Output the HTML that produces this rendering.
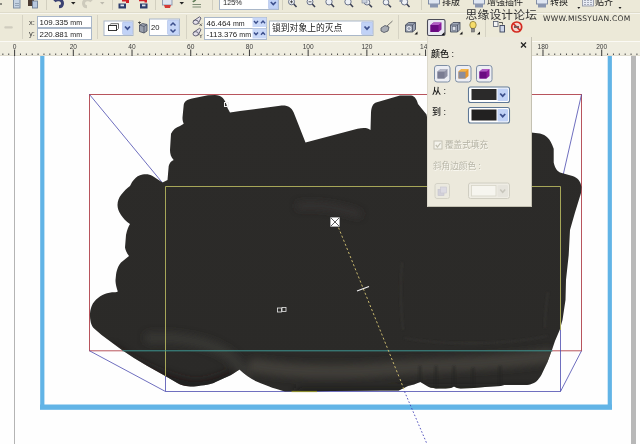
<!DOCTYPE html>
<html lang="zh">
<head>
<meta charset="utf-8">
<title>CorelDRAW</title>
<style>
html,body{margin:0;padding:0;}
body{width:640px;height:444px;overflow:hidden;background:#fff;position:relative;
  font-family:"Liberation Sans","Noto Sans CJK SC",sans-serif;}
#app{position:absolute;left:0;top:0;width:640px;height:444px;overflow:hidden;background:#fefefe;}
.inp,.lbl,.cn,.wm,svg{will-change:transform;}
.abs{position:absolute;}
#tb1{left:0;top:0;width:640px;height:12px;background:#ece9d8;}
#tb2{left:0;top:12px;width:640px;height:29px;background:#ece9d8;border-top:1px solid #dfdccb;box-shadow:inset 0 1px 0 #f7f6ee;box-sizing:border-box;}
#ruler{left:0;top:41px;width:640px;height:15px;background:#efede0;border-top:1px solid #fbfaf5;box-sizing:border-box;}
.inp{position:absolute;background:#fff;border:1px solid #a9b7c9;box-sizing:border-box;font-size:7.9px;line-height:9px;color:#222;white-space:nowrap;overflow:hidden;}
.inp span{position:absolute;left:1.6px;top:1px;}
.inp i{font-style:normal;font-size:7px;}
.lbl{position:absolute;font-size:7.5px;line-height:9px;color:#333;white-space:nowrap;}
.cn{position:absolute;font-size:9px;line-height:10px;color:#1a1a1a;white-space:nowrap;}
.b{font-weight:500;}
.sep{position:absolute;width:1px;background:#c9c6b6;}
.arrowbtn{position:absolute;background:#c3d3f5;border:1px solid #b0c2ec;box-sizing:border-box;border-radius:1px;}
.rl{position:absolute;font-size:7.5px;line-height:8px;color:#333;top:43px;width:20px;text-align:center;}
#panel{left:427px;top:37px;width:105px;height:170px;background:#ece9dc;border:1px solid #c4c1b2;border-left-color:#dcd9cc;border-top:none;box-sizing:border-box;}
</style>
</head>
<body>
<div id="app">

<!-- canvas artwork -->
<svg class="abs" style="left:0;top:56px" width="640" height="388" viewBox="0 56 640 388">
  <defs>
    <linearGradient id="gb" x1="0" y1="0" x2="0" y2="1">
      <stop offset="0" stop-color="#2c2b29"/>
      <stop offset="1" stop-color="#2b2a28"/>
    </linearGradient>
    <clipPath id="cb"><use href="#blob"/></clipPath>
    <filter id="bl" x="-20%" y="-50%" width="140%" height="200%"><feGaussianBlur stdDeviation="3.5"/></filter>
    <filter id="bl2" x="-20%" y="-50%" width="140%" height="200%"><feGaussianBlur stdDeviation="1.2"/></filter>
  </defs>
  <rect x="0" y="56" width="640" height="388" fill="#fefefe"/>
  <!-- guide lines -->
  <rect x="14" y="56" width="1" height="388" fill="#b4b4b4"/>
  <rect x="631" y="56" width="5" height="388" fill="#b8b8b8"/>
  <!-- page border -->
  <path d="M42.3 56 V407 H609.8 V56" fill="none" stroke="#62b4e6" stroke-width="4.2"/>
  <rect x="40" y="404.5" width="572" height="5.3" fill="#62b4e6"/>
  <!-- red bounding box -->
  <rect x="89.500" y="94.500" width="492" height="256.300" fill="none" stroke="#b8545c" stroke-width="1"/>
  <!-- blue perspective lines (behind) -->
  <path d="M89.500 94.500 L165.500 186.500 M581.500 94.500 L560.500 186.500 M89.500 350.800 L165.500 391.500 M581.500 350.800 L560.500 391.500 M165.500 391.500 H560.500 M560.500 330 V391.500 M165.500 375 V391.500" fill="none" stroke="#4a4aae" stroke-width="0.800"/>
  <!-- blob -->
  <path id="blob" fill="url(#gb)" d="M215 95 C221 95 225 98 227.5 108 L230 112.5 L240 111 L280 105.7 C288 105 291 107 293.7 112.5 L305.5 142.5 L357.5 128.7 C363 127.5 368 127.5 370.5 130 L371 112.5 C371.500 106 373 104 376 102.500 L400 95.500 L411 95.500 C415 96 417 100 418 104 L426.500 114.500 L430 132 L531 132.500 L540 133.500 C546 135 550 138 553.700 148.700 L553.700 162.500 C555 168 557 171 560 172.500 L572.500 176 C578 178 580.500 181 581.500 187 L581 193 L575 212.500 L570 230 L568.700 255 L566 280 L565.5 300 L562.5 320 L559.7 330 L555 341 L552 349.7 L547.5 362 L542.8 372 C541 376 539.5 378 538 379.7 C536 382 534.5 383 532.5 383.4 C530 384.5 528 385 525 385 L504.4 385 L500.6 386 L485 387 L473.7 388 L460.6 388.5 L457 388 L454 386.6 L451 388 L445.6 388.5 L436 388.5 C432 388 429.5 387.500 427 386 L420.3 382 C416 384 412 385 408 386 L398.7 390.4 L380 390.6 L285 391.4 C278 390 267.5 386.4 256.6 381.6 C250 378.5 245 374.5 239.5 369.5 C236 372 230 376 223.8 378.3 C219 380.5 216 382 213.7 383 C209 384.7 205 385.3 201 385.6 C197 386.3 193 386.7 190.3 386.5 C187 386.3 184.5 386 182.5 385.3 C179 384 177 383 174.7 381.4 L165.3 376 L146.5 365.5 L134 358 L122.3 350.3 L112.4 343 L101.6 335 L94.4 328.7 C92.5 327 91.5 325 90.8 322.4 C90 319 89.8 316 90 313.4 C90.3 310 91 308 91.7 306 C93 302.5 95.5 300 98 298 C101 295.5 104 294 107 293.2 L112 292.3 C114.5 292.3 116.5 292.2 117.8 291.5 C116 286 115.500 283 115.500 280 L116 275 C117 268 119 265 121 262.500 L129 256 C126.500 253 125.500 250 125 247.500 L126 235 C127 230 128.500 226.500 130 224 C126 221.500 123 218 121 215 C118.500 211 117.500 208 117.500 205 C117.500 201 119 197.500 121 195 C124 191 127 188 130 186 C131.500 183 132.500 181 133.700 180 C136 177 139 175 142.500 174.500 C147 174 150 174.500 152.500 176 L162.500 182.500 L167.500 180 L168.700 166 C169.500 163 171 161 173.700 160 C171 157 170 154 170 150 L171 133.700 C173 129.500 176 127.500 180 126 L183.700 123.700 C182.500 121 182.500 119 182.500 117.500 L183.700 105 C184.500 101 187 99.500 192 98.500 L208 95.300 Z"/>
  <!-- extrude shading -->
  <g clip-path="url(#cb)">
    <g filter="url(#bl)" fill="none" stroke-linecap="round">
      <path d="M255 366 C300 374 360 372 400 368 C450 364 500 364 548 356" stroke="#42403c" stroke-width="14" opacity="0.9"/>
      <path d="M150 338 C190 336 222 346 236 362 C241 368 243 372 246 376" stroke="#3d3b38" stroke-width="11" opacity="0.7"/>
      <path d="M112 350 C130 362 160 378 190 384 C205 386 220 380 232 374" stroke="#1e1d1c" stroke-width="9" opacity="0.8"/>
      <path d="M300 392 H545" stroke="#201f1e" stroke-width="9" opacity="0.9"/>
      <path d="M300 206 C320 204 340 208 358 214" stroke="#373633" stroke-width="7" opacity="0.8"/>
    </g>
    <g filter="url(#bl2)" stroke="#242322" stroke-width="1.600" opacity="0.8" fill="none">
      <path d="M436 366 V389 M454 366 V388 M473 368 V389 M500 366 V387 M420 366 V384"/>
    </g>
    <g filter="url(#bl2)" stroke="#3b3a37" stroke-width="1.200" opacity="0.9" fill="none">
      <path d="M404 338 C440 345 500 346 548 336"/>
      <path d="M402 262 C400 285 401 310 403 330"/>
      <path d="M548 292 C546 305 545 318 545 328"/>
    </g>
  </g>
  <!-- yellow face rect -->
  <path d="M165.500 376 V186.500 H560.500 V330" fill="none" stroke="#a6a658" stroke-width="1"/>
  <path d="M291.500 391.500 H317" stroke="#8c8c30" stroke-width="1.200"/>
  <!-- teal line over blob -->
  <path d="M122.500 350.800 H552.500" stroke="#3e9692" stroke-width="1"/>
  <!-- dashed VP line -->
  <path d="M338.500 227.500 L399.500 378" stroke="#c8b86e" stroke-width="1" stroke-dasharray="2.2 2.2" fill="none"/>
  <path d="M400 379 L404.500 391" stroke="#c8b86e" stroke-width="1" stroke-dasharray="2.2 2.2" fill="none"/>
  <path d="M404.500 391.500 L427 444" stroke="#4444b8" stroke-width="0.9" stroke-dasharray="1.6 2" fill="none"/>
  <!-- VP marker -->
  <rect x="330" y="217" width="10" height="10" fill="#fff" stroke="#2a2a2a" stroke-width="0.8"/>
  <path d="M331 218 L339 226 M339 218 L331 226" stroke="#333" stroke-width="0.8"/>
  <!-- tick -->
  <path d="M357 291 L369 286.500" stroke="#f2f2f2" stroke-width="1.2"/>
  <!-- small markers -->
  <rect x="277.500" y="308" width="4" height="4" fill="none" stroke="#e8e8e8" stroke-width="0.8"/>
  <rect x="282" y="307.500" width="4" height="4" fill="none" stroke="#e8e8e8" stroke-width="0.8"/>
  <rect x="224.500" y="102.500" width="4" height="4" fill="none" stroke="#f0f0f0" stroke-width="1"/>
</svg>

<!-- TOOLBAR ROW 1 -->
<div id="tb1" class="abs"></div>
<svg class="abs" style="left:0;top:0" width="640" height="12" viewBox="0 0 640 12">
  <!-- left small grip -->
  <rect x="0" y="3" width="2" height="2" fill="#8a8a80"/>
  <!-- doc icon -->
  <rect x="13.500" y="-1" width="6.500" height="9" fill="#c4d2e2" stroke="#7f8fa3" stroke-width="1"/>
  <path d="M15 3.500 H19 M15 5.500 H19" stroke="#8898ac" stroke-width="0.8"/>
  <!-- paste icon -->
  <rect x="28" y="-1" width="6" height="7" fill="#4a3a30"/>
  <rect x="32.500" y="1" width="5" height="7" fill="#b8c8de" stroke="#6f7f95" stroke-width="0.9"/>
  <rect x="46" y="0" width="1" height="10" fill="#d2cfbf"/>
  <!-- undo -->
  <path d="M54.500 1.200 C57 -1.500 62.500 -0.500 62.500 3.300 C62.500 5.500 61 6.800 59 6.800" fill="none" stroke="#3b4272" stroke-width="3"/>
  <path d="M71 2 H75.500 L73.250 4.500 Z" fill="#222"/>
  <!-- redo disabled -->
  <path d="M91.500 1.200 C89 -1.500 83.500 -0.500 83.500 3.300 C83.500 5.500 85 6.800 87 6.800" fill="none" stroke="#cdcabc" stroke-width="3"/>
  <path d="M100 2 H104.500 L102.250 4.500 Z" fill="#bdbaae"/>
  <rect x="112" y="0" width="1" height="10" fill="#d2cfbf"/>
  <!-- import -->
  <path d="M122 0 H129 V3 H126 V1.500 H122 Z" fill="#d02028"/>
  <rect x="118.500" y="3.500" width="7.500" height="5" fill="#2c3c6c"/>
  <rect x="120.500" y="4.500" width="3.500" height="1.800" fill="#dfe6f0"/>
  <!-- export -->
  <path d="M139 0 H147 V2.500 L144.500 2.500 V1.300 H139 Z" fill="#d02028"/>
  <rect x="140" y="3.500" width="7.500" height="5" fill="#2c3c6c"/>
  <rect x="142" y="4.500" width="3.500" height="1.800" fill="#dfe6f0"/>
  <rect x="155" y="0" width="1" height="10" fill="#d2cfbf"/>
  <!-- app launcher -->
  <rect x="162.500" y="-1" width="9.500" height="6" fill="#dde3ee" stroke="#8a93a8" stroke-width="0.9"/>
  <path d="M164 5 H171 L170 8 H165 Z" fill="#d43a36"/>
  <path d="M179.500 2 H184 L181.750 4.500 Z" fill="#222"/>
  <!-- options icon -->
  <path d="M192.500 1.500 L196 0 M192.500 4.500 H201 M192.500 7 H201" stroke="#7d8c74" stroke-width="1.100" fill="none"/>
  <path d="M193 2 L195.500 0.300" stroke="#5a7a50" stroke-width="1.200"/>
  <rect x="212" y="0" width="1" height="10" fill="#d2cfbf"/>
  <!-- zoom combo -->
  <rect x="219.500" y="-1" width="59" height="10.500" fill="#fff" stroke="#a9b7c9" stroke-width="1"/>
  <rect x="268.500" y="-1" width="9.500" height="10" rx="1" fill="#c1d2f6" stroke="#aebfe8" stroke-width="0.600"/>
  <path d="M270.800 2 L273.300 4.600 L275.800 2" stroke="#3c4f8c" stroke-width="1.600" fill="none"/>
  <rect x="282" y="0" width="1" height="10" fill="#d2cfbf"/>
  <!-- zoom icons -->
  <g fill="#eef1f6" stroke="#6a7288" stroke-width="1">
    <circle cx="291.500" cy="1.800" r="3"/><circle cx="310" cy="1.800" r="3"/><circle cx="329" cy="1.800" r="3.200"/>
    <circle cx="348" cy="1.800" r="3.200"/><circle cx="367" cy="2.200" r="2.800"/><circle cx="386" cy="2.200" r="2.800"/><circle cx="404.500" cy="1.800" r="3.200"/>
  </g>
  <g stroke="#3a3f52" stroke-width="1.500" fill="none">
    <path d="M293.800 4 L296.500 7"/><path d="M312.300 4 L315 7"/><path d="M331.300 4 L334 7"/><path d="M350.300 4 L353 7"/><path d="M369.300 4.400 L372 7.200"/><path d="M388.300 4.400 L391 7.200"/><path d="M406.800 4 L409.500 7"/>
  </g>
  <path d="M290 1.800 H293 M291.500 0.300 V3.300 M308.500 1.800 H311.500" stroke="#333" stroke-width="0.800"/>
  <rect x="362" y="-1" width="5" height="4" fill="#c9d0dc" stroke="#7a8296" stroke-width="0.600"/>
  <rect x="399.500" y="-1" width="3" height="3" fill="#8a93a8"/>
  <rect x="421" y="0" width="1" height="10" fill="#d2cfbf"/>
  <!-- menu icons -->
  <g>
    <rect x="428.500" y="-1" width="11" height="5" fill="#dfe6f2" stroke="#7a86a0" stroke-width="0.900"/>
    <rect x="430" y="4" width="8" height="3.500" fill="#8a96b0"/>
    <rect x="473.500" y="-1" width="11" height="5" fill="#dfe6f2" stroke="#7a86a0" stroke-width="0.900"/>
    <rect x="475" y="4" width="8" height="3.500" fill="#8a96b0"/>
    <rect x="536.500" y="-1" width="11" height="5" fill="#dfe6f2" stroke="#7a86a0" stroke-width="0.900"/>
    <rect x="538" y="4" width="8" height="3.500" fill="#8a96b0"/>
    <rect x="582.500" y="-1" width="11" height="7" fill="#e8ecf4" stroke="#8a90a0" stroke-width="0.800"/>
    <path d="M585 0 V6 M588 0 V6 M591 0 V6" stroke="#555c70" stroke-width="0.900" stroke-dasharray="1 1"/>
  </g>
  <path d="M577.300 7 h3 l-1.500 2 Z M618.500 7 h3 l-1.500 2 Z" fill="#222"/>
</svg>
<div class="lbl" style="left:222.500px;top:-1.800px;font-size:8px;line-height:9px;color:#222;transform:scaleX(0.93);transform-origin:0 0;">125%</div>
<div class="cn" style="left:442px;top:-3.500px;">排版</div>
<div class="cn" style="left:487px;top:-3.500px;">增强插件</div>
<div class="cn" style="left:550px;top:-3.500px;">转换</div>
<div class="cn" style="left:595px;top:-3.500px;">贴齐</div>
<!-- TOOLBAR ROW 2 (property bar) -->
<div id="tb2" class="abs"></div>
<svg class="abs" style="left:0;top:12px" width="640" height="29" viewBox="0 12 640 29">
  <!-- disabled dash -->
  <rect x="4.300" y="26.300" width="8.500" height="2.200" rx="1" fill="#cfccbe"/>
  <rect x="22" y="15" width="1" height="24" fill="#d6d3c4"/>
  <rect x="97" y="15" width="1" height="24" fill="#d6d3c4"/>
  <!-- preset combo -->
  <rect x="104" y="21" width="29" height="14.500" fill="#fff" stroke="#a9b7c9" stroke-width="1"/>
  <rect x="122.500" y="22" width="10" height="12.500" rx="1" fill="#c1d2f6" stroke="#aebfe8" stroke-width="0.600"/>
  <path d="M125 26.500 L127.500 29.200 L130 26.500" stroke="#3c4f8c" stroke-width="1.700" fill="none"/>
  <rect x="108.500" y="25.500" width="8" height="5" fill="#fff" stroke="#333" stroke-width="1"/>
  <path d="M109.500 25 L111 23.700 H118.500 V28.500 L117 30" stroke="#444" stroke-width="0.800" fill="none"/>
  <!-- depth icon -->
  <path d="M139.500 25 L142.500 23.500 L147 24.500 V31 L144 33 L139.500 31.500 Z" fill="#9aa0ae" stroke="#454a5a" stroke-width="0.800"/>
  <path d="M139.500 25 L144 26.500 L147 24.500 M144 26.500 V33" stroke="#454a5a" stroke-width="0.700" fill="none"/>
  <path d="M138 22.500 H141 M139.500 21.500 V24" stroke="#333" stroke-width="0.800"/>
  <!-- spin box -->
  <rect x="149.500" y="19" width="30" height="16.500" fill="#fff" stroke="#a9b7c9" stroke-width="1"/>
  <rect x="167.500" y="20" width="11.500" height="14.500" rx="1" fill="#c6d6f7" stroke="#aebfe8" stroke-width="0.600"/>
  <path d="M170.500 25.500 L173 23 L175.500 25.500 M170.500 29.500 L173 32 L175.500 29.500" stroke="#3c4f8c" stroke-width="1.500" fill="none"/>
  <rect x="186" y="15" width="1" height="24" fill="#d6d3c4"/>
  <!-- VP icons -->
  <g stroke="#55556a" stroke-width="0.900" fill="#e4e0ea">
    <path d="M193.300 21 L199.500 16.800 L201 18 L198.300 23.500 Z"/>
    <ellipse cx="195.700" cy="22.300" rx="2.700" ry="2.100"/>
    <path d="M193.300 32.500 L199.500 28.300 L201 29.500 L198.300 35 Z"/>
    <ellipse cx="195.700" cy="33.800" rx="2.700" ry="2.100"/>
  </g>
  <path d="M199.500 23.500 L202 26 M202 23.500 L199.500 26" stroke="#444" stroke-width="0.700"/>
  <path d="M199.500 34.500 L200.800 36 L202 34.500 M200.800 36 V38" stroke="#444" stroke-width="0.700" fill="none"/>
  <!-- VP inputs spinner bg -->
  <!-- lock combo -->
  <rect x="269.500" y="21" width="103.500" height="14.500" fill="#fff" stroke="#a9b7c9" stroke-width="1"/>
  <rect x="361.500" y="22" width="11" height="12.500" rx="1" fill="#c1d2f6" stroke="#aebfe8" stroke-width="0.600"/>
  <path d="M364.500 26.500 L367 29.200 L369.500 26.500" stroke="#3c4f8c" stroke-width="1.700" fill="none"/>
  <!-- icon: vp gem -->
  <path d="M381 28 L385 25.500 L389 27 L388 31 L384 32.500 L381 31 Z" fill="#a8acb4" stroke="#4a4f5c" stroke-width="0.800"/>
  <path d="M387 26 L392.500 21" stroke="#555" stroke-width="0.800"/>
  <rect x="398" y="15" width="1" height="24" fill="#d6d3c4"/>
  <!-- icon: rotate cube -->
  <path d="M405.500 25 L408.500 22.500 H415.500 V29.500 L412.500 32 H405.500 Z" fill="#9aa2b2" stroke="#3e4454" stroke-width="0.800"/>
  <path d="M405.500 25 H412.500 V32 M412.500 25 L415.500 22.500" stroke="#3e4454" stroke-width="0.700" fill="none"/>
  <circle cx="409" cy="28.500" r="2" fill="none" stroke="#f4f4f8" stroke-width="0.900"/>
  <path d="M414.500 34.500 h3 v-3 Z" fill="#111"/>
  <!-- selected colour button -->
  <rect x="427.500" y="19.500" width="17.500" height="16" rx="1.500" fill="#e9e8f2" stroke="#4c4c58" stroke-width="1.100"/>
  <path d="M430.500 25 L433.500 22.500 H441.500 V29.500 L438.500 32 H430.500 Z" fill="#8a1a9a"/>
  <path d="M430.500 25 H438.500 V32 H430.500 Z" fill="#6a0a82"/>
  <path d="M430.500 25 L433.500 22.500 H441.500 L438.500 25 Z" fill="#b05cc4"/>
  <path d="M441.500 35 h3 v-3 Z" fill="#111"/>
  <!-- icon: bevel cube -->
  <path d="M450.500 25 L453 22.500 H460 V29.500 L457.500 32 H450.500 Z" fill="#a4acbc" stroke="#3e4454" stroke-width="0.800"/>
  <path d="M450.500 25 H457.500 V32 M457.500 25 L460 22.500" stroke="#3e4454" stroke-width="0.700" fill="none"/>
  <rect x="452.300" y="26.700" width="3.500" height="3.500" fill="#dfe3ec" stroke="#5a6070" stroke-width="0.500"/>
  <path d="M459.500 34.500 h3 v-3 Z" fill="#111"/>
  <!-- bulb -->
  <ellipse cx="473" cy="25" rx="3.200" ry="3.600" fill="#f6dc6a" stroke="#8a7830" stroke-width="0.800"/>
  <rect x="471.500" y="28.500" width="3" height="3.500" fill="#8a8a8a" stroke="#555" stroke-width="0.500"/>
  <path d="M477 34.500 h3 v-3 Z" fill="#111"/>
  <rect x="485" y="15" width="1" height="24" fill="#d6d3c4"/>
  <!-- copy icon -->
  <rect x="493.500" y="21.500" width="4.500" height="5" fill="#f4f4f4" stroke="#50586c" stroke-width="0.800"/>
  <rect x="500" y="25.500" width="4.500" height="6.500" fill="#cdd6ea" stroke="#39415a" stroke-width="0.900"/>
  <path d="M499 22.500 H502.500 V24.500" stroke="#333" stroke-width="0.800" fill="none"/>
  <!-- prohibit -->
  <circle cx="516.700" cy="27" r="5" fill="#f2d6d0" stroke="#d42a20" stroke-width="1.700"/>
  <path d="M513.200 23.500 L520.200 30.500" stroke="#d42a20" stroke-width="1.700"/>
  <rect x="514" y="26" width="5" height="2" fill="#7a5a58"/>
</svg>
<div class="lbl" style="left:29px;top:18.300px;">x:</div>
<div class="lbl" style="left:29px;top:29.300px;">y:</div>
<div class="inp" style="left:37px;top:16px;width:54.500px;height:12px;"><span>109.335 <i>mm</i></span></div>
<div class="inp" style="left:37px;top:27.500px;width:54.500px;height:12px;"><span>220.881 <i>mm</i></span></div>
<div class="lbl" style="left:151px;top:22.500px;font-size:7.600px;color:#222;">20</div>
<div class="inp" style="left:204px;top:16.500px;width:62.500px;height:11.500px;"><span>46.464 <i>mm</i></span></div>
<div class="inp" style="left:204px;top:27.500px;width:62.500px;height:12px;"><span>-113.376 <i>mm</i></span></div>
<svg class="abs" style="left:252px;top:17px" width="15" height="22" viewBox="252 17 15 22">
  <rect x="252.500" y="17.500" width="14" height="9.500" fill="#c9d8f7"/>
  <rect x="252.500" y="28.500" width="14" height="10" fill="#c9d8f7"/>
  <g stroke="#3c4f8c" stroke-width="1.400" fill="none">
    <path d="M254 21 L256 23.200 L258 21 M261 23.200 L263 21 L265 23.200"/>
    <path d="M254 32.500 L256 34.700 L258 32.500 M261 34.700 L263 32.500 L265 34.700"/>
  </g>
</svg>
<div class="cn" style="left:271.500px;top:23px;font-size:8.800px;">锁到对象上的灭点</div>
<!-- RULER -->
<div id="ruler" class="abs"></div>
<svg class="abs" style="left:0;top:41px" width="640" height="15" viewBox="0 41 640 15">
  <rect x="0" y="55.300" width="640" height="0.700" fill="#d8d5c8"/>
  <rect x="2.36" y="53.500" width="1" height="1.500" fill="#4a4a4a"/>
  <rect x="8.23" y="53.500" width="1" height="1.500" fill="#4a4a4a"/>
  <rect x="14.10" y="49.500" width="1" height="6.500" fill="#3a3a3a"/>
  <rect x="19.97" y="53.500" width="1" height="1.500" fill="#4a4a4a"/>
  <rect x="25.84" y="53.500" width="1" height="1.500" fill="#4a4a4a"/>
  <rect x="31.71" y="53.500" width="1" height="1.500" fill="#4a4a4a"/>
  <rect x="37.58" y="53.500" width="1" height="1.500" fill="#4a4a4a"/>
  <rect x="43.46" y="53.500" width="1" height="1.500" fill="#4a4a4a"/>
  <rect x="49.33" y="53.500" width="1" height="1.500" fill="#4a4a4a"/>
  <rect x="55.20" y="53.500" width="1" height="1.500" fill="#4a4a4a"/>
  <rect x="61.07" y="53.500" width="1" height="1.500" fill="#4a4a4a"/>
  <rect x="66.94" y="53.500" width="1" height="1.500" fill="#4a4a4a"/>
  <rect x="72.81" y="49.500" width="1" height="6.500" fill="#3a3a3a"/>
  <rect x="78.68" y="53.500" width="1" height="1.500" fill="#4a4a4a"/>
  <rect x="84.55" y="53.500" width="1" height="1.500" fill="#4a4a4a"/>
  <rect x="90.42" y="53.500" width="1" height="1.500" fill="#4a4a4a"/>
  <rect x="96.29" y="53.500" width="1" height="1.500" fill="#4a4a4a"/>
  <rect x="102.17" y="53.500" width="1" height="1.500" fill="#4a4a4a"/>
  <rect x="108.04" y="53.500" width="1" height="1.500" fill="#4a4a4a"/>
  <rect x="113.91" y="53.500" width="1" height="1.500" fill="#4a4a4a"/>
  <rect x="119.78" y="53.500" width="1" height="1.500" fill="#4a4a4a"/>
  <rect x="125.65" y="53.500" width="1" height="1.500" fill="#4a4a4a"/>
  <rect x="131.52" y="49.500" width="1" height="6.500" fill="#3a3a3a"/>
  <rect x="137.39" y="53.500" width="1" height="1.500" fill="#4a4a4a"/>
  <rect x="143.26" y="53.500" width="1" height="1.500" fill="#4a4a4a"/>
  <rect x="149.13" y="53.500" width="1" height="1.500" fill="#4a4a4a"/>
  <rect x="155.00" y="53.500" width="1" height="1.500" fill="#4a4a4a"/>
  <rect x="160.88" y="53.500" width="1" height="1.500" fill="#4a4a4a"/>
  <rect x="166.75" y="53.500" width="1" height="1.500" fill="#4a4a4a"/>
  <rect x="172.62" y="53.500" width="1" height="1.500" fill="#4a4a4a"/>
  <rect x="178.49" y="53.500" width="1" height="1.500" fill="#4a4a4a"/>
  <rect x="184.36" y="53.500" width="1" height="1.500" fill="#4a4a4a"/>
  <rect x="190.23" y="49.500" width="1" height="6.500" fill="#3a3a3a"/>
  <rect x="196.10" y="53.500" width="1" height="1.500" fill="#4a4a4a"/>
  <rect x="201.97" y="53.500" width="1" height="1.500" fill="#4a4a4a"/>
  <rect x="207.84" y="53.500" width="1" height="1.500" fill="#4a4a4a"/>
  <rect x="213.71" y="53.500" width="1" height="1.500" fill="#4a4a4a"/>
  <rect x="219.59" y="53.500" width="1" height="1.500" fill="#4a4a4a"/>
  <rect x="225.46" y="53.500" width="1" height="1.500" fill="#4a4a4a"/>
  <rect x="231.33" y="53.500" width="1" height="1.500" fill="#4a4a4a"/>
  <rect x="237.20" y="53.500" width="1" height="1.500" fill="#4a4a4a"/>
  <rect x="243.07" y="53.500" width="1" height="1.500" fill="#4a4a4a"/>
  <rect x="248.94" y="49.500" width="1" height="6.500" fill="#3a3a3a"/>
  <rect x="254.81" y="53.500" width="1" height="1.500" fill="#4a4a4a"/>
  <rect x="260.68" y="53.500" width="1" height="1.500" fill="#4a4a4a"/>
  <rect x="266.55" y="53.500" width="1" height="1.500" fill="#4a4a4a"/>
  <rect x="272.42" y="53.500" width="1" height="1.500" fill="#4a4a4a"/>
  <rect x="278.30" y="53.500" width="1" height="1.500" fill="#4a4a4a"/>
  <rect x="284.17" y="53.500" width="1" height="1.500" fill="#4a4a4a"/>
  <rect x="290.04" y="53.500" width="1" height="1.500" fill="#4a4a4a"/>
  <rect x="295.91" y="53.500" width="1" height="1.500" fill="#4a4a4a"/>
  <rect x="301.78" y="53.500" width="1" height="1.500" fill="#4a4a4a"/>
  <rect x="307.65" y="49.500" width="1" height="6.500" fill="#3a3a3a"/>
  <rect x="313.52" y="53.500" width="1" height="1.500" fill="#4a4a4a"/>
  <rect x="319.39" y="53.500" width="1" height="1.500" fill="#4a4a4a"/>
  <rect x="325.26" y="53.500" width="1" height="1.500" fill="#4a4a4a"/>
  <rect x="331.13" y="53.500" width="1" height="1.500" fill="#4a4a4a"/>
  <rect x="337.01" y="53.500" width="1" height="1.500" fill="#4a4a4a"/>
  <rect x="342.88" y="53.500" width="1" height="1.500" fill="#4a4a4a"/>
  <rect x="348.75" y="53.500" width="1" height="1.500" fill="#4a4a4a"/>
  <rect x="354.62" y="53.500" width="1" height="1.500" fill="#4a4a4a"/>
  <rect x="360.49" y="53.500" width="1" height="1.500" fill="#4a4a4a"/>
  <rect x="366.36" y="49.500" width="1" height="6.500" fill="#3a3a3a"/>
  <rect x="372.23" y="53.500" width="1" height="1.500" fill="#4a4a4a"/>
  <rect x="378.10" y="53.500" width="1" height="1.500" fill="#4a4a4a"/>
  <rect x="383.97" y="53.500" width="1" height="1.500" fill="#4a4a4a"/>
  <rect x="389.84" y="53.500" width="1" height="1.500" fill="#4a4a4a"/>
  <rect x="395.72" y="53.500" width="1" height="1.500" fill="#4a4a4a"/>
  <rect x="401.59" y="53.500" width="1" height="1.500" fill="#4a4a4a"/>
  <rect x="407.46" y="53.500" width="1" height="1.500" fill="#4a4a4a"/>
  <rect x="413.33" y="53.500" width="1" height="1.500" fill="#4a4a4a"/>
  <rect x="419.20" y="53.500" width="1" height="1.500" fill="#4a4a4a"/>
  <rect x="425.07" y="49.500" width="1" height="6.500" fill="#3a3a3a"/>
  <rect x="430.94" y="53.500" width="1" height="1.500" fill="#4a4a4a"/>
  <rect x="436.81" y="53.500" width="1" height="1.500" fill="#4a4a4a"/>
  <rect x="442.68" y="53.500" width="1" height="1.500" fill="#4a4a4a"/>
  <rect x="448.55" y="53.500" width="1" height="1.500" fill="#4a4a4a"/>
  <rect x="454.43" y="53.500" width="1" height="1.500" fill="#4a4a4a"/>
  <rect x="460.30" y="53.500" width="1" height="1.500" fill="#4a4a4a"/>
  <rect x="466.17" y="53.500" width="1" height="1.500" fill="#4a4a4a"/>
  <rect x="472.04" y="53.500" width="1" height="1.500" fill="#4a4a4a"/>
  <rect x="477.91" y="53.500" width="1" height="1.500" fill="#4a4a4a"/>
  <rect x="483.78" y="49.500" width="1" height="6.500" fill="#3a3a3a"/>
  <rect x="489.65" y="53.500" width="1" height="1.500" fill="#4a4a4a"/>
  <rect x="495.52" y="53.500" width="1" height="1.500" fill="#4a4a4a"/>
  <rect x="501.39" y="53.500" width="1" height="1.500" fill="#4a4a4a"/>
  <rect x="507.26" y="53.500" width="1" height="1.500" fill="#4a4a4a"/>
  <rect x="513.13" y="53.500" width="1" height="1.500" fill="#4a4a4a"/>
  <rect x="519.01" y="53.500" width="1" height="1.500" fill="#4a4a4a"/>
  <rect x="524.88" y="53.500" width="1" height="1.500" fill="#4a4a4a"/>
  <rect x="530.75" y="53.500" width="1" height="1.500" fill="#4a4a4a"/>
  <rect x="536.62" y="53.500" width="1" height="1.500" fill="#4a4a4a"/>
  <rect x="542.49" y="49.500" width="1" height="6.500" fill="#3a3a3a"/>
  <rect x="548.36" y="53.500" width="1" height="1.500" fill="#4a4a4a"/>
  <rect x="554.23" y="53.500" width="1" height="1.500" fill="#4a4a4a"/>
  <rect x="560.10" y="53.500" width="1" height="1.500" fill="#4a4a4a"/>
  <rect x="565.97" y="53.500" width="1" height="1.500" fill="#4a4a4a"/>
  <rect x="571.85" y="53.500" width="1" height="1.500" fill="#4a4a4a"/>
  <rect x="577.72" y="53.500" width="1" height="1.500" fill="#4a4a4a"/>
  <rect x="583.59" y="53.500" width="1" height="1.500" fill="#4a4a4a"/>
  <rect x="589.46" y="53.500" width="1" height="1.500" fill="#4a4a4a"/>
  <rect x="595.33" y="53.500" width="1" height="1.500" fill="#4a4a4a"/>
  <rect x="601.20" y="49.500" width="1" height="6.500" fill="#3a3a3a"/>
  <rect x="607.07" y="53.500" width="1" height="1.500" fill="#4a4a4a"/>
  <rect x="612.94" y="53.500" width="1" height="1.500" fill="#4a4a4a"/>
  <rect x="618.81" y="53.500" width="1" height="1.500" fill="#4a4a4a"/>
  <rect x="624.68" y="53.500" width="1" height="1.500" fill="#4a4a4a"/>
  <rect x="630.56" y="53.500" width="1" height="1.500" fill="#4a4a4a"/>
  <rect x="636.43" y="53.500" width="1" height="1.500" fill="#4a4a4a"/>
  <g font-family="Liberation Sans, sans-serif" font-size="6.600" fill="#3a3a3a"><text x="14.6" y="49.300" text-anchor="middle">0</text><text x="73.3" y="49.300" text-anchor="middle">20</text><text x="132.0" y="49.300" text-anchor="middle">40</text><text x="190.7" y="49.300" text-anchor="middle">60</text><text x="249.4" y="49.300" text-anchor="middle">80</text><text x="308.2" y="49.300" text-anchor="middle">100</text><text x="366.9" y="49.300" text-anchor="middle">120</text><text x="425.6" y="49.300" text-anchor="middle">140</text><text x="484.3" y="49.300" text-anchor="middle">160</text><text x="543.0" y="49.300" text-anchor="middle">180</text><text x="601.7" y="49.300" text-anchor="middle">200</text></g>
</svg>

<!-- PANEL -->
<div id="panel" class="abs"></div>
<svg class="abs" style="left:427px;top:37px" width="105" height="170" viewBox="427 37 105 170">
  <!-- close x -->
  <path d="M521 42.500 L526 47.500 M526 42.500 L521 47.500" stroke="#222" stroke-width="1.300"/>
  <!-- 3 buttons -->
  <g fill="#edeef4" stroke="#7e8ea4" stroke-width="1">
    <rect x="434.500" y="65.500" width="15.500" height="16.500" rx="2.500"/>
    <rect x="455.500" y="65.500" width="15.500" height="16.500" rx="2.500"/>
    <rect x="476.500" y="65.500" width="15.500" height="16.500" rx="2.500"/>
  </g>
  <!-- cube 1 gray -->
  <path d="M437.500 71.500 L440.500 69 H447.500 V76 L444.500 78.500 H437.500 Z" fill="#8e90a4"/>
  <path d="M437.500 71.500 H444.500 V78.500 H437.500 Z" fill="#7a7c92"/>
  <path d="M437.500 71.500 L440.500 69 H447.500 L444.500 71.500 Z" fill="#b4b6c6"/>
  <!-- cube 2 orange/gray -->
  <path d="M458.500 71.500 L461.500 69 H468.500 V76 L465.500 78.500 H458.500 Z" fill="#e8962a"/>
  <path d="M458.500 71.500 H465.500 V78.500 H458.500 Z" fill="#8a8c9c"/>
  <path d="M458.500 71.500 L461.500 69 H468.500 L465.500 71.500 Z" fill="#f4b64a"/>
  <!-- cube 3 purple -->
  <path d="M479.500 71.500 L482.500 69 H489.500 V76 L486.500 78.500 H479.500 Z" fill="#8a1a9a"/>
  <path d="M479.500 71.500 H486.500 V78.500 H479.500 Z" fill="#6a0a82"/>
  <path d="M479.500 71.500 L482.500 69 H489.500 L486.500 71.500 Z" fill="#b05cc4"/>
  <!-- colour combos -->
  <g>
    <rect x="468.500" y="87" width="41" height="15.500" rx="2" fill="#fff" stroke="#5f7896" stroke-width="1.100"/>
    <rect x="471.500" y="89" width="25" height="11" fill="#2b2a2a"/>
    <rect x="497.500" y="88.500" width="10.500" height="12.500" rx="1" fill="#c1d2f6"/>
    <path d="M500.200 93.500 L502.700 96.200 L505.200 93.500" stroke="#3c4f8c" stroke-width="1.700" fill="none"/>
    <rect x="468.500" y="107.500" width="41" height="15.500" rx="2" fill="#fff" stroke="#5f7896" stroke-width="1.100"/>
    <rect x="471.500" y="109.500" width="25" height="11" fill="#222121"/>
    <rect x="497.500" y="109" width="10.500" height="12.500" rx="1" fill="#c1d2f6"/>
    <path d="M500.200 114 L502.700 116.700 L505.200 114" stroke="#3c4f8c" stroke-width="1.700" fill="none"/>
  </g>
  <!-- checkbox disabled -->
  <rect x="434" y="141" width="8" height="8" fill="#f4f3ec" stroke="#c4c2b4" stroke-width="1"/>
  <path d="M435.800 145 L437.500 147 L440.500 143" stroke="#c2c0b2" stroke-width="1.200" fill="none"/>
  <!-- disabled button -->
  <rect x="435" y="183.500" width="14.500" height="15" rx="2" fill="#ebe9df" stroke="#d4d2c6" stroke-width="1"/>
  <rect x="438" y="189.500" width="6" height="6" fill="#d2d0da" stroke="#c4c2cc" stroke-width="0.600"/>
  <rect x="440.500" y="187" width="6" height="6" fill="#dcdae2" stroke="#c8c6d0" stroke-width="0.600"/>
  <!-- disabled combo -->
  <rect x="468.500" y="183" width="41" height="15.500" rx="2" fill="#efede4" stroke="#d0cec2" stroke-width="1"/>
  <rect x="471.500" y="185.500" width="24.500" height="10.500" fill="#f6f5ef" stroke="#d6d4c8" stroke-width="0.800"/>
  <rect x="497.500" y="185" width="10.500" height="12" rx="1" fill="#e6e4dc"/>
  <path d="M500.200 189.500 L502.700 192.200 L505.200 189.500" stroke="#c8c6bc" stroke-width="1.600" fill="none"/>
</svg>
<div class="cn" style="left:430.500px;top:49px;font-weight:500;color:#111;">颜色 :</div>
<div class="cn" style="left:432px;top:86px;font-weight:500;color:#111;">从 :</div>
<div class="cn" style="left:432px;top:106.500px;font-weight:500;color:#111;">到 :</div>
<div class="cn" style="left:444.500px;top:140px;font-size:8.600px;color:#b4b2a4;text-shadow:0.6px 0.6px 0 #fbfaf4;">覆盖式填充</div>
<div class="cn" style="left:433px;top:160.500px;font-size:8.600px;color:#b8b6a8;text-shadow:0.6px 0.6px 0 #fbfaf4;">斜角边颜色 :</div>

<!-- watermark -->
<div class="abs" style="left:465.500px;top:8.300px;font-size:11.800px;line-height:14px;color:#333;white-space:nowrap;letter-spacing:0.150px;">思缘设计论坛</div>
<div class="abs" style="left:543px;top:13.500px;font-family:'DejaVu Sans','Liberation Sans',sans-serif;font-size:7.600px;line-height:9px;color:#2e2e2e;white-space:nowrap;letter-spacing:0.230px;">WWW.MISSYUAN.COM</div>

</div>
</body>
</html>
